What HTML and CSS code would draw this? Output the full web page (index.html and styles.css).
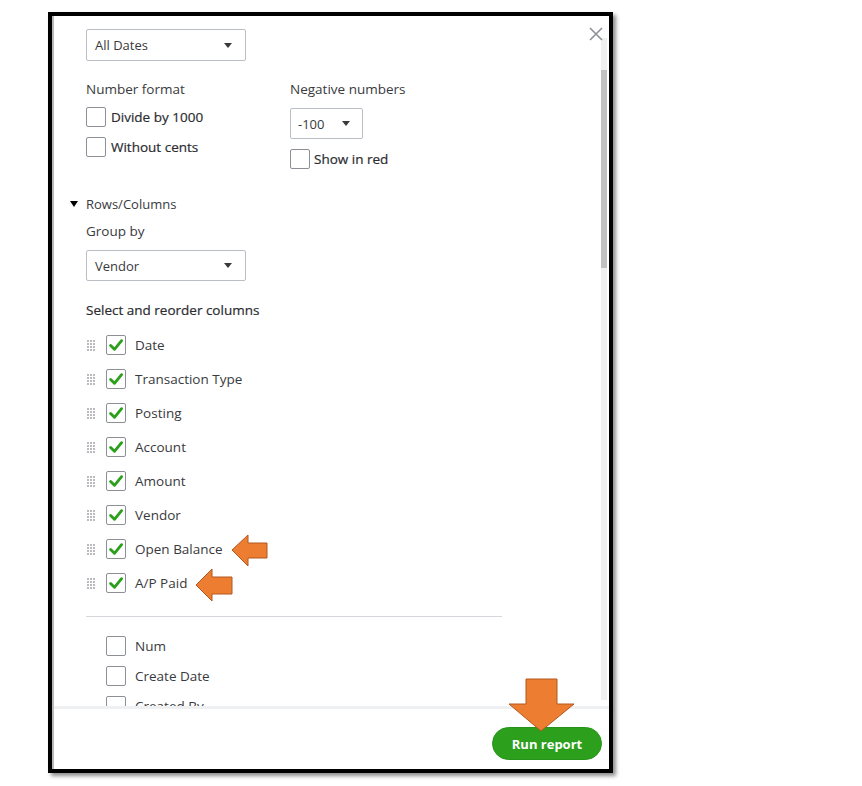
FILE: index.html
```html
<!DOCTYPE html>
<html>
<head>
<meta charset="utf-8">
<link rel="stylesheet" href="styles.css">
</head>
<body>
<div class="frame">
  <div class="inner">
    <div class="scroll">
      <div class="content">
        <div class="select select-wide"><span>All Dates</span><span class="caret"></span></div>

        <div class="format-row">
          <div class="col col-left">
            <div class="label">Number format</div>
            <label class="cb-row first"><span class="cb"></span><span class="strong">Divide by 1000</span></label>
            <label class="cb-row second"><span class="cb"></span><span class="strong">Without cents</span></label>
          </div>
          <div class="col">
            <div class="label">Negative numbers</div>
            <div class="select select-small"><span>-100</span><span class="caret"></span></div>
            <label class="cb-row red"><span class="cb"></span><span class="strong">Show in red</span></label>
          </div>
        </div>

        <div class="toggle"><span class="tri"></span><span>Rows/Columns</span></div>
        <div class="label group-label">Group by</div>
        <div class="select select-wide vendor"><span>Vendor</span><span class="caret"></span></div>

        <div class="label strong reorder">Select and reorder columns</div>
        <ul class="cols">
          <li><svg class="grip" viewBox="0 0 9 11"><g><circle cx="1" cy="1" r="0.9"/><circle cx="4" cy="1" r="0.9"/><circle cx="7" cy="1" r="0.9"/><circle cx="1" cy="4" r="0.9"/><circle cx="4" cy="4" r="0.9"/><circle cx="7" cy="4" r="0.9"/><circle cx="1" cy="7" r="0.9"/><circle cx="4" cy="7" r="0.9"/><circle cx="7" cy="7" r="0.9"/><circle cx="1" cy="10" r="0.9"/><circle cx="4" cy="10" r="0.9"/><circle cx="7" cy="10" r="0.9"/></g></svg><span class="cb checked"><svg viewBox="0 0 20 20"><path d="M4 10.5 L8.3 14.8 L16.2 5.2"/></svg></span><span>Date</span></li>
          <li><svg class="grip" viewBox="0 0 9 11"><g><circle cx="1" cy="1" r="0.9"/><circle cx="4" cy="1" r="0.9"/><circle cx="7" cy="1" r="0.9"/><circle cx="1" cy="4" r="0.9"/><circle cx="4" cy="4" r="0.9"/><circle cx="7" cy="4" r="0.9"/><circle cx="1" cy="7" r="0.9"/><circle cx="4" cy="7" r="0.9"/><circle cx="7" cy="7" r="0.9"/><circle cx="1" cy="10" r="0.9"/><circle cx="4" cy="10" r="0.9"/><circle cx="7" cy="10" r="0.9"/></g></svg><span class="cb checked"><svg viewBox="0 0 20 20"><path d="M4 10.5 L8.3 14.8 L16.2 5.2"/></svg></span><span>Transaction Type</span></li>
          <li><svg class="grip" viewBox="0 0 9 11"><g><circle cx="1" cy="1" r="0.9"/><circle cx="4" cy="1" r="0.9"/><circle cx="7" cy="1" r="0.9"/><circle cx="1" cy="4" r="0.9"/><circle cx="4" cy="4" r="0.9"/><circle cx="7" cy="4" r="0.9"/><circle cx="1" cy="7" r="0.9"/><circle cx="4" cy="7" r="0.9"/><circle cx="7" cy="7" r="0.9"/><circle cx="1" cy="10" r="0.9"/><circle cx="4" cy="10" r="0.9"/><circle cx="7" cy="10" r="0.9"/></g></svg><span class="cb checked"><svg viewBox="0 0 20 20"><path d="M4 10.5 L8.3 14.8 L16.2 5.2"/></svg></span><span>Posting</span></li>
          <li><svg class="grip" viewBox="0 0 9 11"><g><circle cx="1" cy="1" r="0.9"/><circle cx="4" cy="1" r="0.9"/><circle cx="7" cy="1" r="0.9"/><circle cx="1" cy="4" r="0.9"/><circle cx="4" cy="4" r="0.9"/><circle cx="7" cy="4" r="0.9"/><circle cx="1" cy="7" r="0.9"/><circle cx="4" cy="7" r="0.9"/><circle cx="7" cy="7" r="0.9"/><circle cx="1" cy="10" r="0.9"/><circle cx="4" cy="10" r="0.9"/><circle cx="7" cy="10" r="0.9"/></g></svg><span class="cb checked"><svg viewBox="0 0 20 20"><path d="M4 10.5 L8.3 14.8 L16.2 5.2"/></svg></span><span>Account</span></li>
          <li><svg class="grip" viewBox="0 0 9 11"><g><circle cx="1" cy="1" r="0.9"/><circle cx="4" cy="1" r="0.9"/><circle cx="7" cy="1" r="0.9"/><circle cx="1" cy="4" r="0.9"/><circle cx="4" cy="4" r="0.9"/><circle cx="7" cy="4" r="0.9"/><circle cx="1" cy="7" r="0.9"/><circle cx="4" cy="7" r="0.9"/><circle cx="7" cy="7" r="0.9"/><circle cx="1" cy="10" r="0.9"/><circle cx="4" cy="10" r="0.9"/><circle cx="7" cy="10" r="0.9"/></g></svg><span class="cb checked"><svg viewBox="0 0 20 20"><path d="M4 10.5 L8.3 14.8 L16.2 5.2"/></svg></span><span>Amount</span></li>
          <li><svg class="grip" viewBox="0 0 9 11"><g><circle cx="1" cy="1" r="0.9"/><circle cx="4" cy="1" r="0.9"/><circle cx="7" cy="1" r="0.9"/><circle cx="1" cy="4" r="0.9"/><circle cx="4" cy="4" r="0.9"/><circle cx="7" cy="4" r="0.9"/><circle cx="1" cy="7" r="0.9"/><circle cx="4" cy="7" r="0.9"/><circle cx="7" cy="7" r="0.9"/><circle cx="1" cy="10" r="0.9"/><circle cx="4" cy="10" r="0.9"/><circle cx="7" cy="10" r="0.9"/></g></svg><span class="cb checked"><svg viewBox="0 0 20 20"><path d="M4 10.5 L8.3 14.8 L16.2 5.2"/></svg></span><span>Vendor</span></li>
          <li><svg class="grip" viewBox="0 0 9 11"><g><circle cx="1" cy="1" r="0.9"/><circle cx="4" cy="1" r="0.9"/><circle cx="7" cy="1" r="0.9"/><circle cx="1" cy="4" r="0.9"/><circle cx="4" cy="4" r="0.9"/><circle cx="7" cy="4" r="0.9"/><circle cx="1" cy="7" r="0.9"/><circle cx="4" cy="7" r="0.9"/><circle cx="7" cy="7" r="0.9"/><circle cx="1" cy="10" r="0.9"/><circle cx="4" cy="10" r="0.9"/><circle cx="7" cy="10" r="0.9"/></g></svg><span class="cb checked"><svg viewBox="0 0 20 20"><path d="M4 10.5 L8.3 14.8 L16.2 5.2"/></svg></span><span>Open Balance</span></li>
          <li><svg class="grip" viewBox="0 0 9 11"><g><circle cx="1" cy="1" r="0.9"/><circle cx="4" cy="1" r="0.9"/><circle cx="7" cy="1" r="0.9"/><circle cx="1" cy="4" r="0.9"/><circle cx="4" cy="4" r="0.9"/><circle cx="7" cy="4" r="0.9"/><circle cx="1" cy="7" r="0.9"/><circle cx="4" cy="7" r="0.9"/><circle cx="7" cy="7" r="0.9"/><circle cx="1" cy="10" r="0.9"/><circle cx="4" cy="10" r="0.9"/><circle cx="7" cy="10" r="0.9"/></g></svg><span class="cb checked"><svg viewBox="0 0 20 20"><path d="M4 10.5 L8.3 14.8 L16.2 5.2"/></svg></span><span>A/P Paid</span></li>
        </ul>
        <div class="divider"></div>
        <ul class="cols off">
          <li><span class="cb"></span><span>Num</span></li>
          <li><span class="cb"></span><span>Create Date</span></li>
          <li><span class="cb"></span><span>Created By</span></li>
        </ul>
      </div>
      <div class="scrollbar"><div class="thumb"></div></div>
      <div class="close"><svg viewBox="0 0 14 14"><path d="M1 1 L13 13 M13 1 L1 13"/></svg></div>
    </div>
    <div class="footer">
      <button class="run">Run report</button>
    </div>
  </div>
</div>
<svg class="annot" width="862" height="786" viewBox="0 0 862 786">
  <polygon points="232,550 248,535 248,543 267,543 267,558 248,558 248,566"/>
  <polygon points="196,585 212,569 212,577 232,577 232,594 212,594 212,601"/>
  <polygon points="526,679 557,679 557,704 574,704 541,731 509,704 526,704"/>
</svg>
</body>
</html>
```

FILE: styles.css
```css
* { box-sizing: border-box; }
html, body { margin: 0; padding: 0; background: #fff; }
body {
  position: relative;
  width: 862px;
  height: 786px;
  overflow: hidden;
  font-family: "Open Sans", "Liberation Sans", sans-serif;
  font-size: 13.5px;
  color: #393a3d;
}
.frame {
  margin: 12px 0 0 48px;
  width: 565px;
  height: 761px;
  border: 4px solid #000;
  box-shadow: 3px 3px 4px rgba(0,0,0,0.45);
  background: #fff;
}
.inner {
  height: 100%;
  display: flex;
  flex-direction: column;
  border-left: 2px solid #b8b8b8;
}
.scroll {
  position: relative;
  flex: 1;
  display: flex;
  overflow: hidden;
}
.content {
  flex: 1;
  padding: 13px 0 0 32px;
}
.scrollbar {
  width: 6px;
  margin: 22px 2px 6px 0;
  background: #f0f0f0;
  padding-top: 32px;
}
.thumb {
  height: 198px;
  background: #c1c1c1;
}
.close {
  position: absolute;
  top: 11px;
  right: 6px;
  width: 14px;
  height: 14px;
}
.close svg { display: block; width: 14px; height: 14px; }
.close path { stroke: #8d9096; stroke-width: 1.6; fill: none; }

.select {
  display: flex;
  align-items: center;
  justify-content: space-between;
  height: 32px;
  border: 1px solid #babec5;
  border-radius: 2px;
  padding: 0 13px 0 8px;
  color: #393a3d;
  font-size: 13px;
}
.select-wide { width: 160px; }
.select-small { width: 73px; height: 31px; margin-top: 9px; padding: 0 12px 0 7px; }
.caret {
  width: 0; height: 0;
  border-left: 4.5px solid transparent;
  border-right: 4.5px solid transparent;
  border-top: 5px solid #393a3d;
}
.label { line-height: 20px; }
.strong { font-weight: 400; color: #2b2c2f; -webkit-text-stroke: 0.2px #2b2c2f; }

.format-row {
  display: flex;
  margin-top: 18px;
}
.col-left { width: 204px; }
.cb-row {
  display: flex;
  align-items: center;
  gap: 5px;
  height: 20px;
}
.cb-row.first { margin-top: 8px; }
.cb-row.second { margin-top: 10px; }
.cb-row.red { margin-top: 10px; gap: 4px; }
.cb {
  flex: none;
  width: 20px;
  height: 20px;
  border: 1px solid #8d9096;
  border-radius: 2px;
  background: #fff;
  display: block;
}
.cb svg { display: block; width: 18px; height: 18px; }
.cb path { stroke: #2ca01c; stroke-width: 3.2; fill: none; stroke-linecap: round; stroke-linejoin: round; }

.toggle {
  display: flex;
  align-items: center;
  gap: 8px;
  margin: 25px 0 0 -16px;
  line-height: 20px;
  font-size: 13px;
}
.tri {
  width: 0; height: 0;
  border-left: 4.5px solid transparent;
  border-right: 4.5px solid transparent;
  border-top: 6px solid #000;
}
.group-label { margin-top: 7px; }
.vendor { margin-top: 9px; height: 31px; }
.reorder { margin-top: 19px; }

.cols {
  list-style: none;
  margin: 8px 0 0;
  padding: 0;
}
.cols li {
  display: flex;
  align-items: center;
  height: 34px;
}
.cols li .cb { margin-right: 9px; }
.grip {
  flex: none;
  width: 9px;
  height: 11px;
  margin: 1px 10px 0 1px;
  fill: #9a9ca1;
}
.divider {
  margin-top: 16px;
  width: 416px;
  height: 1px;
  background: #d4d7dc;
}
.cols.off { margin-top: 14px; padding-left: 20px; }
.cols.off li { height: 30px; }

.footer {
  flex: none;
  height: 63px;
  border-top: 3px solid #eef0f2;
  display: flex;
  justify-content: flex-end;
  align-items: flex-start;
}
.run {
  margin: 18px 7px 0 0;
  width: 110px;
  height: 33px;
  border-radius: 17px;
  border: 1px solid #27921a;
  background: #2ca01c;
  color: #fff;
  font-family: "Open Sans", "Liberation Sans", sans-serif;
  font-weight: 700;
  font-size: 13px;
  padding: 0;
}
.annot {
  position: absolute;
  left: 0;
  top: 0;
  pointer-events: none;
}
.annot polygon {
  fill: #ed7d31;
  stroke: #b2581f;
  stroke-width: 1;
}
```
